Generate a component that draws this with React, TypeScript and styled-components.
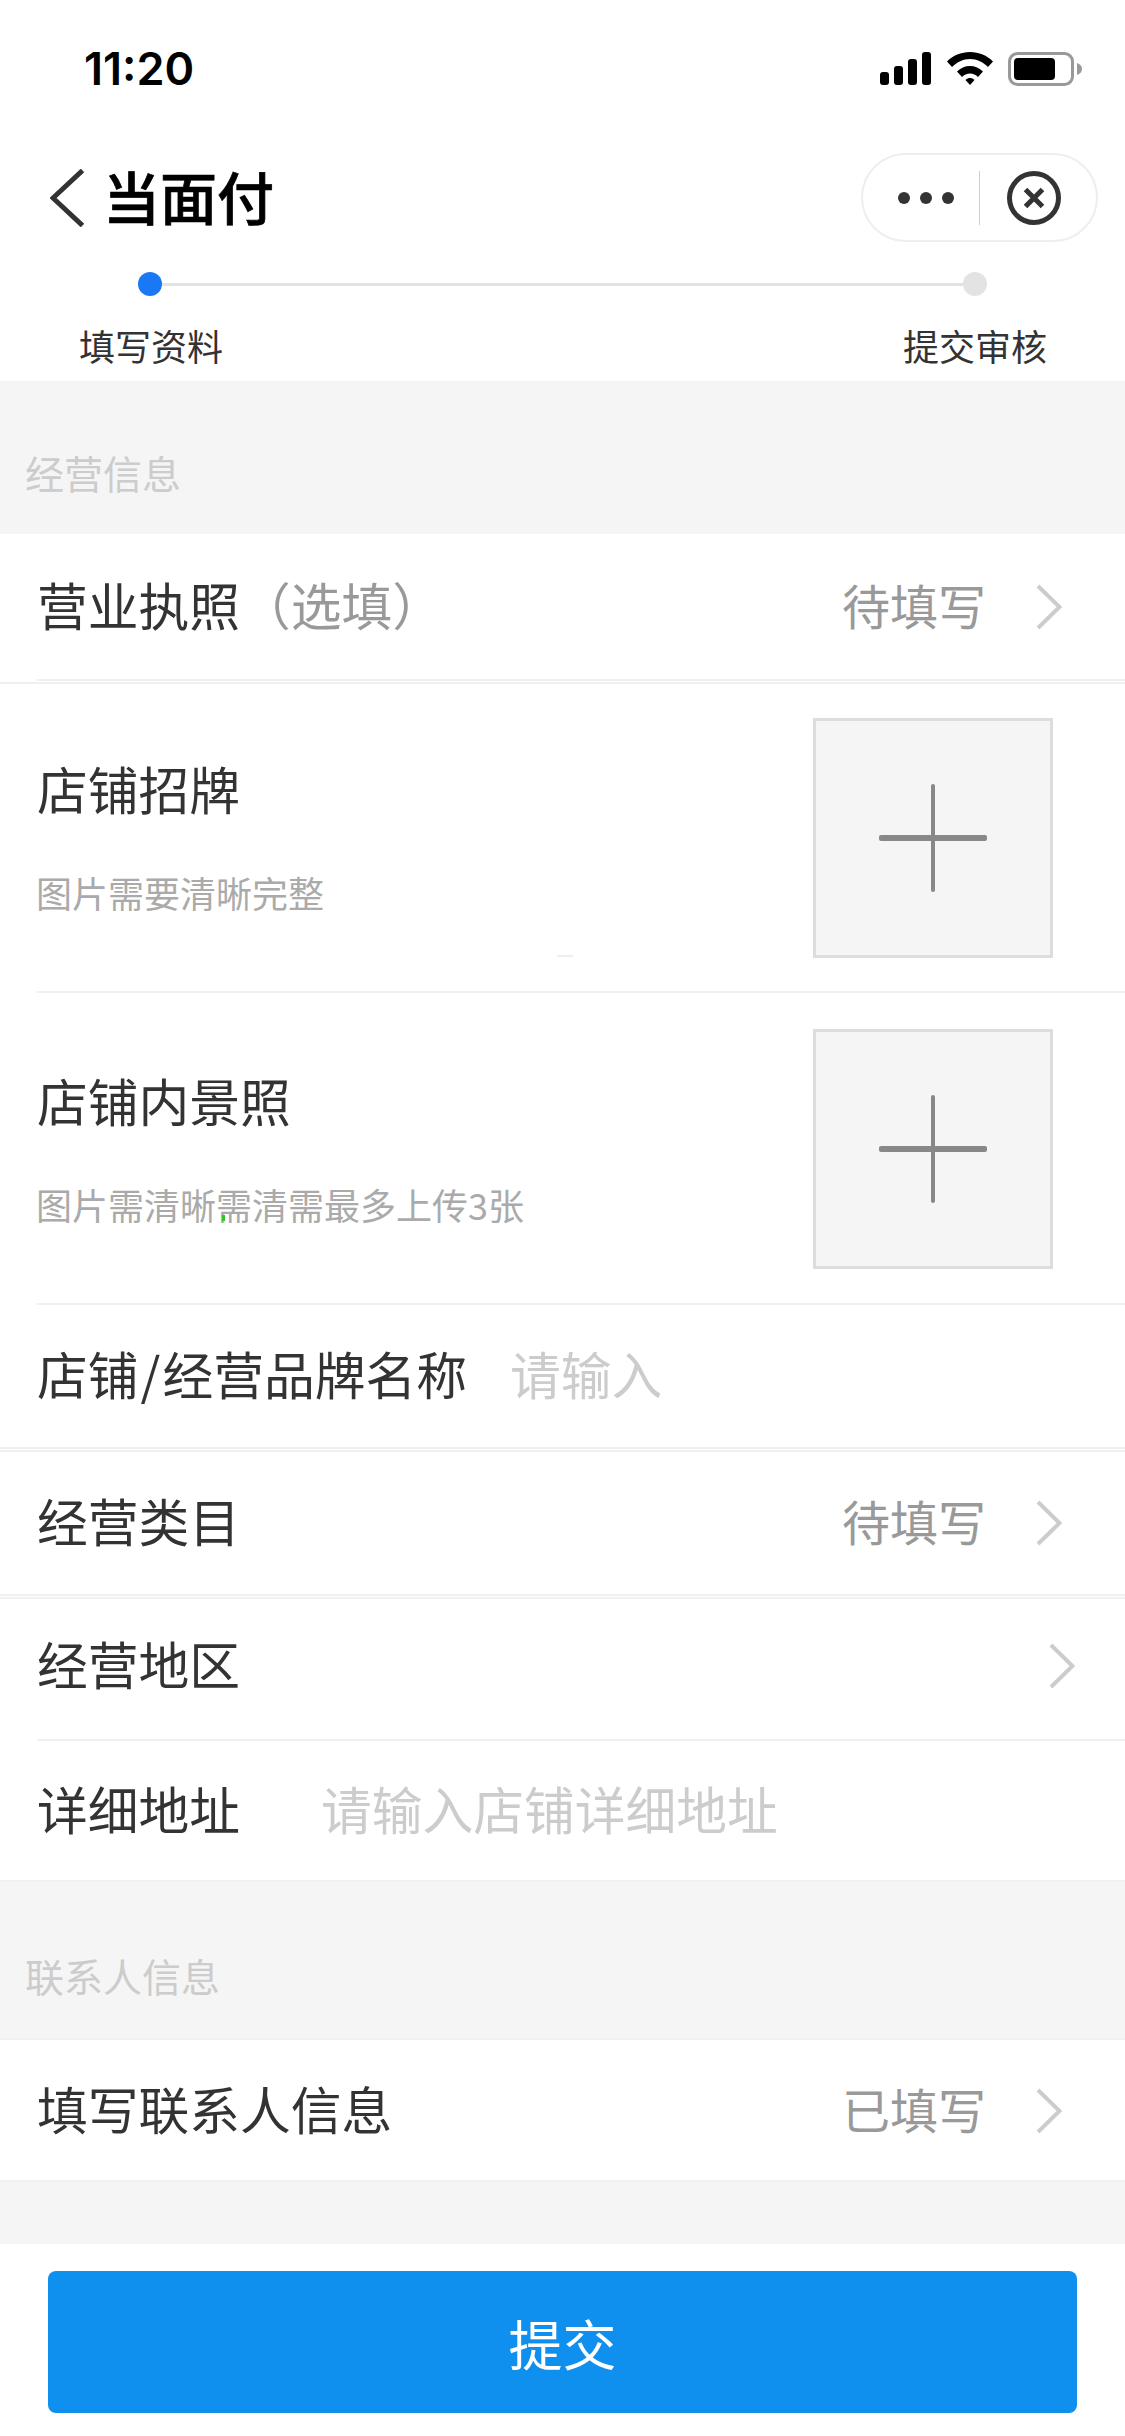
import React from "react";
import styled, { createGlobalStyle } from "styled-components";

const Global = createGlobalStyle`
  html, body { margin: 0; padding: 0; background: #fff; }
  body { font-family: "Noto Sans CJK SC", "Liberation Sans", sans-serif; }
`;

const Page = styled.div`
  width: 1125px;
  height: 2436px;
  overflow: hidden;
  background: #fff;
  display: flex;
  flex-direction: column;
`;

const StatusBar = styled.div`
  height: 153px;
  box-sizing: border-box;
  padding: 45px 43px 0 84px;
  display: flex;
  justify-content: space-between;
  align-items: flex-start;
`;
const Time = styled.div`
  font: 600 45px/48px Inter, "Liberation Sans", sans-serif;
  color: #000;
`;
const StatusIcons = styled.div`
  display: flex;
  align-items: flex-start;
  gap: 15px;
  padding-top: 7px;
`;

const NavBar = styled.div`
  height: 89px;
  box-sizing: border-box;
  padding: 0 27px 0 50px;
  display: flex;
  align-items: center;
`;
const NavTitle = styled.div`
  margin-left: 19px;
  padding-bottom: 6px;
  font-size: 57px;
  line-height: 60px;
  font-weight: 500;
  -webkit-text-stroke: 0.7px #000;
  color: #000;
  flex: 1;
`;
const Capsule = styled.div`
  width: 237px;
  height: 89px;
  box-sizing: border-box;
  border: 2px solid #eee;
  border-radius: 45px;
  display: flex;
  align-items: center;
  background: #fff;
`;
const MenuDots = styled.div`
  width: 116px;
  box-sizing: border-box;
  padding-left: 35px;
  display: flex;
  gap: 10px;
`;
const Dot = styled.span`
  width: 12px;
  height: 12px;
  border-radius: 50%;
  background: #333;
`;
const CapsuleRule = styled.div`
  width: 1px;
  height: 54px;
  background: #ccc;
`;
const CloseWrap = styled.div`
  flex: 1;
  padding-right: 8px;
  display: flex;
  justify-content: center;
`;

const Stepper = styled.div`
  height: 139px;
  display: flex;
  flex-direction: column;
`;
const Track = styled.div`
  margin: 30px 138px 0 138px;
  display: flex;
  align-items: center;
`;
const StepDot = styled.span<{ $active?: boolean }>`
  width: 24px;
  height: 24px;
  border-radius: 50%;
  background: ${(p) => (p.$active ? "#1a78f5" : "#e3e3e3")};
`;
const TrackLine = styled.span`
  flex: 1;
  height: 3px;
  background: #e3e3e3;
`;
const StepLabels = styled.div`
  margin-top: 26px;
  padding: 0 78px 0 79px;
  display: flex;
  justify-content: space-between;
  font-size: 36px;
  line-height: 46px;
  color: #333;
`;

const SectionHeader = styled.div<{ $height: number; $pad: number }>`
  height: ${(p) => p.$height}px;
  box-sizing: border-box;
  padding: 0 0 ${(p) => p.$pad}px 25px;
  background: #f5f5f5;
  display: flex;
  align-items: flex-end;
  font-size: 39px;
  line-height: 44px;
  color: #ccc;
`;

const Row = styled.div<{ $height: number; $lift: number; $right?: number }>`
  height: ${(p) => p.$height}px;
  box-sizing: border-box;
  padding: 0 ${(p) => p.$right ?? 63}px ${(p) => p.$lift}px 37px;
  display: flex;
  align-items: center;
  background: #fff;
`;
const Label = styled.div`
  font-size: 50.75px;
  line-height: 60px;
  color: #333;
  white-space: nowrap;
`;
const Slash = styled.span`
  padding: 0 2px;
`;
const Optional = styled.span`
  color: #999;
`;
const Value = styled.div`
  margin-left: auto;
  margin-right: 50px;
  font-size: 48px;
  line-height: 60px;
  color: #999;
`;
const Placeholder = styled.div<{ $gap: number }>`
  margin-left: ${(p) => p.$gap}px;
  font-size: 50.75px;
  line-height: 60px;
  color: #ccc;
  white-space: nowrap;
`;
const Chevron = styled.svg<{ $auto?: boolean }>`
  width: 26px;
  height: 46px;
  flex: none;
  margin-top: 6px;
  margin-left: ${(p) => (p.$auto ? "auto" : "0")};
`;

const UploadRow = styled.div<{ $height: number; $nudge?: number }>`
  position: relative;
  height: ${(p) => p.$height}px;
  box-sizing: border-box;
  padding: ${(p) => p.$nudge ?? 0}px 72px 0 37px;
  display: flex;
  justify-content: space-between;
  align-items: center;
`;
const UploadInfo = styled.div`
  display: flex;
  flex-direction: column;
  gap: 56px;
  padding-bottom: 7px;
`;
const Hint = styled.div`
  margin-left: -1px;
  font-size: 36px;
  line-height: 36px;
  color: #aaa;
  white-space: nowrap;
`;
const UploadBox = styled.div`
  width: 240px;
  height: 240px;
  box-sizing: border-box;
  border: 3px solid #ddd;
  background: #f5f5f5;
  display: flex;
  align-items: center;
  justify-content: center;
`;
const Speck = styled.span<{ $x: number; $y: number; $w: number; $h: number; $c: string }>`
  position: absolute;
  left: ${(p) => p.$x}px;
  top: ${(p) => p.$y}px;
  width: ${(p) => p.$w}px;
  height: ${(p) => p.$h}px;
  background: ${(p) => p.$c};
`;

const Rule = styled.div<{ $inset?: boolean; $gap?: number }>`
  height: 2px;
  margin-left: ${(p) => (p.$inset ? 37 : 0)}px;
  margin-bottom: ${(p) => p.$gap ?? 0}px;
  background: #f0f0f0;
  flex: none;
`;

const Spacer = styled.div`
  height: 62px;
  background: #f5f5f5;
  flex: none;
`;
const Footer = styled.div`
  flex: 1;
  box-sizing: border-box;
  padding: 27px 48px 23px;
  display: flex;
  background: #fff;
`;
const SubmitButton = styled.div`
  flex: 1;
  background: #0f8fee;
  border-radius: 8px;
  display: flex;
  align-items: center;
  justify-content: center;
  color: #fff;
  font-size: 54px;
`;

const ArrowRight = ({ auto }: { auto?: boolean }) => (
  <Chevron $auto={auto} viewBox="0 0 26 46" fill="none">
    <path d="M2 2 L23.5 23 L2 44" stroke="#ccc" strokeWidth="4" />
  </Chevron>
);

const Plus = () => (
  <svg width="110" height="110" viewBox="0 0 110 110">
    <rect x="1" y="52" width="108" height="6" rx="2" fill="#888" />
    <rect x="53" y="1" width="4" height="108" rx="2" fill="#888" />
  </svg>
);

export default function App() {
  return (
    <Page>
      <Global />
      <StatusBar>
        <Time>11:20</Time>
        <StatusIcons>
          <svg width="52" height="33" viewBox="0 0 52 33">
            <rect x="0" y="20" width="9" height="13" rx="3" fill="#000" />
            <rect x="14" y="14" width="9" height="19" rx="3" fill="#000" />
            <rect x="28" y="7" width="9" height="26" rx="3" fill="#000" />
            <rect x="42" y="0" width="9" height="33" rx="3" fill="#000" />
          </svg>
          <svg width="46" height="33" viewBox="0 0 46 33">
            <path d="M0 9.5C6 3.5 14 0 23 0C32 0 40 3.5 46 9.5L41 15C36 10 30 7 23 7C16 7 10 10 5 15Z" fill="#000" />
            <path d="M10 19.5C13.5 16 18 14 23 14C28 14 32.5 16 36 19.5L31 25C29 23 26 21.5 23 21.5C20 21.5 17 23 15 25Z" fill="#000" />
            <path d="M18.5 28C20 26.5 21.5 26 23 26C24.5 26 26 26.5 27.5 28L23 33Z" fill="#000" />
          </svg>
          <svg width="74" height="34" viewBox="0 0 74 34">
            <rect x="1.5" y="1.5" width="63" height="31" rx="8" fill="none" stroke="#999" strokeWidth="3" />
            <rect x="6" y="6" width="41" height="22" rx="4" fill="#000" />
            <path d="M69 11C72 12 74 14 74 17C74 20 72 22 69 23Z" fill="#999" />
          </svg>
        </StatusIcons>
      </StatusBar>

      <NavBar>
        <svg width="34" height="58" viewBox="0 0 34 58" fill="none">
          <path d="M32.5 1.5L3 29L32.5 56.5" stroke="#333" strokeWidth="5" />
        </svg>
        <NavTitle>当面付</NavTitle>
        <Capsule>
          <MenuDots>
            <Dot />
            <Dot />
            <Dot />
          </MenuDots>
          <CapsuleRule />
          <CloseWrap>
            <svg width="54" height="54" viewBox="0 0 54 54" fill="none">
              <circle cx="27" cy="27" r="24.5" stroke="#333" strokeWidth="5" />
              <path d="M18.5 18.5L35.5 35.5M35.5 18.5L18.5 35.5" stroke="#333" strokeWidth="5" />
            </svg>
          </CloseWrap>
        </Capsule>
      </NavBar>

      <Stepper>
        <Track>
          <StepDot $active />
          <TrackLine />
          <StepDot />
        </Track>
        <StepLabels>
          <span>填写资料</span>
          <span>提交审核</span>
        </StepLabels>
      </Stepper>

      <SectionHeader $height={153} $pad={40}>经营信息</SectionHeader>

      <Row $height={145} $lift={5}>
        <Label>
          营业执照<Optional>（选填）</Optional>
        </Label>
        <Value>待填写</Value>
        <ArrowRight />
      </Row>
      <Rule $inset $gap={1} />
      <Rule />

      <UploadRow $height={307}>
        <UploadInfo>
          <Label>店铺招牌</Label>
          <Hint>图片需要清晰完整</Hint>
        </UploadInfo>
        <UploadBox>
          <Plus />
        </UploadBox>
        <Speck $x={557} $y={271} $w={16} $h={2} $c="#eee" />
      </UploadRow>
      <Rule $inset />

      <UploadRow $height={310} $nudge={2}>
        <UploadInfo>
          <Label>店铺内景照</Label>
          <Hint>图片需清晰需清需最多上传3张</Hint>
        </UploadInfo>
        <UploadBox>
          <Plus />
        </UploadBox>
        <Speck $x={222} $y={222} $w={3} $h={6} $c="#2fc52f" />
      </UploadRow>
      <Rule $inset />

      <Row $height={142} $lift={6}>
        <Label>
          店铺<Slash>/</Slash>经营品牌名称
        </Label>
        <Placeholder $gap={43}>请输入</Placeholder>
      </Row>
      <Rule $gap={1} />
      <Rule />

      <Row $height={142} $lift={7}>
        <Label>经营类目</Label>
        <Value>待填写</Value>
        <ArrowRight />
      </Row>
      <Rule $gap={1} />
      <Rule />

      <Row $height={140} $lift={13} $right={50}>
        <Label>经营地区</Label>
        <ArrowRight auto />
      </Row>
      <Rule $inset />

      <Row $height={139} $lift={6}>
        <Label>详细地址</Label>
        <Placeholder $gap={81}>请输入店铺详细地址</Placeholder>
      </Row>
      <Rule />

      <SectionHeader $height={156} $pad={41}>联系人信息</SectionHeader>

      <Rule />
      <Row $height={140} $lift={5}>
        <Label>填写联系人信息</Label>
        <Value>已填写</Value>
        <ArrowRight />
      </Row>
      <Rule />

      <Spacer />

      <Footer>
        <SubmitButton>提交</SubmitButton>
      </Footer>
    </Page>
  );
}
